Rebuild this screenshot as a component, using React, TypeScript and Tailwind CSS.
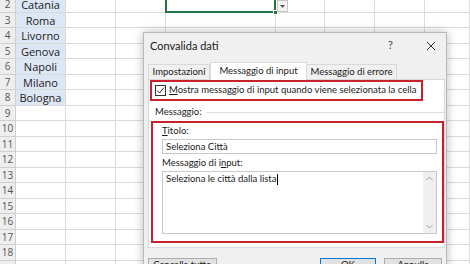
import React from "react";

const cities = ["Catania", "Roma", "Livorno", "Genova", "Napoli", "Milano", "Bologna"];
const rows = Array.from({ length: 18 }, (_, i) => i + 2);
const colWidths = ["w-[50px]", "w-[50px]", "w-[50px]", "w-[110px]", "w-[49px]", "w-[50px]", "w-[50px]", "w-[45px]"];

function Sheet() {
  return (
    <div className="mt-[-3px] font-['Open_Sans',sans-serif]">
      {rows.map((r, i) => (
        <div key={r} className="flex h-[15.5px]">
          <div className="w-[16px] shrink-0 bg-[#eeeeee] border-r border-b border-[#d0d0d0] text-[10px] leading-[15px] text-[#555] text-center">
            {r}
          </div>
          {colWidths.map((w, c) => (
            <div
              key={c}
              className={`${w} shrink-0 border-r border-b border-[#dadada] ${
                c === 0 && i < cities.length ? "bg-[#dde6f4]" : ""
              } text-[11px] leading-[15px] text-[#222] text-center`}
            >
              {c === 0 ? cities[i] : ""}
            </div>
          ))}
        </div>
      ))}
    </div>
  );
}

function Dialog() {
  return (
    <div className="absolute left-[143px] top-[32px] w-[304px] h-[245px] bg-[#f0f0f0] border border-[#b9b9b9] shadow-[0_0_9px_rgba(0,0,0,0.28)] font-['Lato',sans-serif] text-[9.5px] text-[#1a1a1a] whitespace-nowrap">
      <div className="flex items-center h-[25px] pl-[6px] pr-[8px] text-[11px]">
        <span className="flex-1 pt-[2px]">Convalida dati</span>
        <span className="text-[11px] text-[#444] mr-[33px]">?</span>
        <svg width="10" height="10" viewBox="0 0 10 10" className="mr-[2px]">
          <path d="M1 1 L9 9 M9 1 L1 9" stroke="#333" strokeWidth="1" />
        </svg>
      </div>
      <div className="px-[4px] pt-[3px]">
        <div className="flex items-end h-[18px] relative z-10">
          <div className="w-[62px] h-[15px] border border-b-0 border-[#d9d9d9] bg-[#f0f0f0] leading-[14px] text-center">Impostazioni</div>
          <div className="w-[97px] h-[18px] border border-b-0 border-[#d9d9d9] bg-white leading-[16px] text-center mb-[-1px]">Messaggio di input</div>
          <div className="w-[90px] h-[15px] border border-b-0 border-l-0 border-[#d9d9d9] bg-[#f0f0f0] leading-[14px] text-center">Messaggio di errore</div>
        </div>
        <div className="w-[297px] h-[169px] bg-white border border-[#d9d9d9]">
          <div className="ml-[1px] w-[273px] h-[21px] border-2 border-[#c8202c] flex items-center pl-[3px]">
            <div className="w-[11px] h-[11px] border border-[#333] bg-white flex items-center justify-center">
              <svg width="9" height="9" viewBox="0 0 9 9">
                <path d="M1 4.5 L3.5 7 L8 1.5" stroke="#222" strokeWidth="1" fill="none" />
              </svg>
            </div>
            <span className="ml-[3px]">
              <span className="underline">M</span>ostra messaggio di input quando viene selezionata la cella
            </span>
          </div>
          <div className="flex items-center mt-[5px] ml-[6px] h-[12px]">
            <span>Messaggio:</span>
            <div className="flex-1 h-px bg-[#dcdcdc] ml-[4px]" />
          </div>
          <div className="ml-[2px] w-[293px] h-[122px] mt-[3px] border-2 border-[#c8202c] pt-[2px] pl-[9px]">
            <div className="h-[12px] leading-[12px]">
              <span className="underline">T</span>itolo:
            </div>
            <div className="w-[275px] h-[15px] border border-[#c8c8c8] mt-[2px] pl-[3px] leading-[13px]">Seleziona Città</div>
            <div className="h-[14px] leading-[14px] mt-[2px]">
              Messaggio di i<span className="underline">n</span>put:
            </div>
            <div className="w-[275px] h-[63px] border border-[#c8c8c8] mt-[1px] flex">
              <div className="flex-1 pl-[3px] pt-[1px] leading-[12px]">
                Seleziona le città dalla lista<span className="inline-block w-px h-[11px] bg-black align-middle ml-px" />
              </div>
              <div className="w-[13px] bg-[#f0f0f0] flex flex-col justify-between items-center py-[4px]">
                <svg width="7" height="5" viewBox="0 0 7 5"><path d="M0.5 4 L3.5 1 L6.5 4" stroke="#a0a0a0" fill="none" /></svg>
                <svg width="7" height="5" viewBox="0 0 7 5"><path d="M0.5 1 L3.5 4 L6.5 1" stroke="#a0a0a0" fill="none" /></svg>
              </div>
            </div>
          </div>
        </div>
        <div className="flex mt-[10px] h-[17px]">
          <div className="w-[69px] border border-[#adadad] bg-[#e1e1e1] text-center leading-[12px]">
            <span className="underline">C</span>ancella tutto
          </div>
          <div className="ml-[103px] w-[57px] border border-[#0078d7] bg-[#e1e1e1] text-center leading-[12px]">OK</div>
          <div className="ml-[8px] w-[58px] border border-[#adadad] bg-[#e1e1e1] text-center leading-[12px]">Annulla</div>
        </div>
      </div>
    </div>
  );
}

export default function App() {
  return (
    <div className="relative w-[470px] h-[264px] overflow-hidden bg-white">
      <Sheet />
      <div className="absolute left-[165px] top-[-3px] w-[111px] h-[16px] border-2 border-[#217346]" />
      <div className="absolute left-[273px] top-[10px] w-[5px] h-[5px] bg-[#217346] border border-white" />
      <div className="absolute left-[277px] top-0 w-[11px] h-[12px] bg-[#f3f3f3] border border-[#c6c6c6] flex items-center justify-center">
        <svg width="5" height="3" viewBox="0 0 5 3"><path d="M0 0 L5 0 L2.5 3 Z" fill="#555" /></svg>
      </div>
      <Dialog />
    </div>
  );
}
